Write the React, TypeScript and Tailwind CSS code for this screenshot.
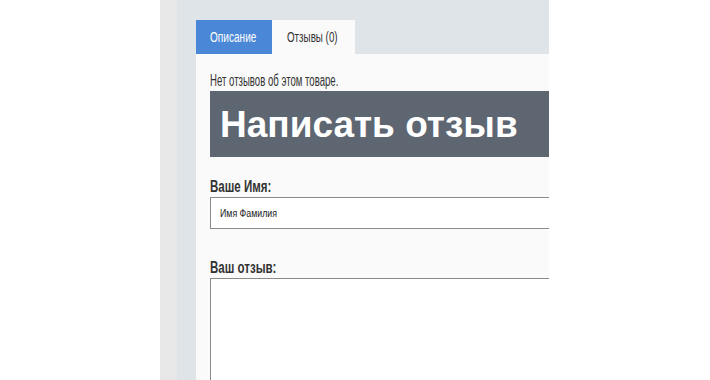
import React from 'react';

const sans = { fontFamily: '"Liberation Sans", Arial, sans-serif' };

// Узкий шрифт эмулируем сжатием по горизонтали
const Narrow: React.FC<{ children: React.ReactNode; className?: string }> = ({ children, className = 'scale-x-[0.68]' }) => (
  <span className={`inline-block origin-left whitespace-nowrap ${className}`} style={sans}>
    {children}
  </span>
);

export default function App() {
  return (
    <div className="w-[710px] h-[380px] bg-white flex overflow-hidden" style={sans}>
      <div className="w-[160px] shrink-0" />
      <div className="w-[17px] shrink-0 bg-[#e7e7e7]" />
      <div className="w-[372px] shrink-0 bg-[#dfe4e8] pl-[19px] pt-[20px] overflow-hidden">
        <div className="flex h-[34px]">
          <div className="w-[76px] bg-[#4a87d6] text-white text-[14px] flex items-center pl-[14px]">
            <Narrow className="scale-x-[0.72]">Описание</Narrow>
          </div>
          <div className="w-[83px] bg-[#fafafa] text-[#333] text-[14px] flex items-center pl-[15px]">
            <Narrow className="scale-x-[0.7]">Отзывы (0)</Narrow>
          </div>
        </div>
        <div className="w-[500px] h-[400px] bg-[#fafafa] pl-[14px] pt-[17px]">
          <p className="text-[16px] leading-[20px] text-[#333]">
            <Narrow className="scale-x-[0.6]">Нет отзывов об этом товаре.</Narrow>
          </p>
          <div className="h-[66px] bg-[#5e6672] flex items-center pl-[10px]">
            <h2 className="text-white text-[37px] font-bold leading-none">Написать отзыв</h2>
          </div>
          <label className="block mt-[20px] text-[16px] leading-[20px] font-bold text-[#333]">
            <Narrow className="scale-x-[0.72]">Ваше Имя:</Narrow>
          </label>
          <div className="w-[460px] h-[32px] bg-white border border-[#8a8a8a] pl-[9px] flex items-center text-[11px] text-[#222]">
            <Narrow className="scale-x-[0.8]">Имя Фамилия</Narrow>
          </div>
          <label className="block mt-[29px] text-[16px] leading-[20px] font-bold text-[#333]">
            <Narrow className="scale-x-[0.72]">Ваш отзыв:</Narrow>
          </label>
          <textarea className="block w-[460px] h-[200px] bg-white border border-[#8a8a8a]" />
        </div>
      </div>
    </div>
  );
}
